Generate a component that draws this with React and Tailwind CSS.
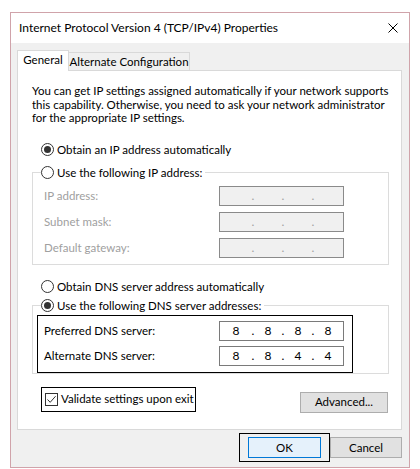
import React from "react";

const font = { fontFamily: 'Lato, "Noto Sans", sans-serif' };

function Radio({ checked, label }) {
	return (
		<div className="flex h-[16px] items-center">
			<span className="flex h-[13px] w-[13px] items-center justify-center rounded-full border border-[#333333] bg-white">
				{checked && <span className="h-[7px] w-[7px] rounded-full bg-[#333333]" />}
			</span>
			<span className="ml-[3px] whitespace-nowrap text-black">{label}</span>
		</div>
	);
}

function IpField({ parts, disabled }) {
	const segs = parts || ["", "", "", ""];
	return (
		<div
			className={
				"flex h-[20px] w-[125px] items-center border pl-[2px] text-[12px] " +
				(disabled ? "border-[#8a8a8a] bg-[#f0f0f0] text-[#a0a0a0]" : "border-[#7a7a7a] bg-white text-black")
			}
		>
			<span className="w-[28px] text-center">{segs[0]}</span>
			<span className="w-[6px] text-center">.</span>
			<span className="w-[24px] text-center">{segs[1]}</span>
			<span className="w-[6px] text-center">.</span>
			<span className="w-[24px] text-center">{segs[2]}</span>
			<span className="w-[6px] text-center">.</span>
			<span className="w-[24px] text-center">{segs[3]}</span>
		</div>
	);
}

function FieldRow({ label, parts, disabled }) {
	return (
		<div className="flex h-[20px] items-center">
			<span className={"w-[175px] " + (disabled ? "text-[#a0a0a0]" : "text-black")}>{label}</span>
			<IpField parts={parts} disabled={disabled} />
		</div>
	);
}

function Button({ children, primary }) {
	return (
		<div
			className={
				"flex h-[21px] items-center justify-center border text-black " +
				(primary ? "w-[73px] border-[#0078d7] bg-[#e5f1fb]" : "w-[72px] border-[#adadad] bg-[#e1e1e1]")
			}
		>
			{children}
		</div>
	);
}

export default function App() {
	return (
		<div className="h-[469px] w-[420px] bg-white pl-[10px] pt-[12px] text-[11.5px] leading-[16px]" style={font}>
			<div className="flex h-[456px] w-[400px] flex-col border border-[#d0a3aa]">
				{/* title bar */}
				<div className="flex h-[30px] items-center justify-between bg-white pl-[8px] pr-[11px] text-[12px]">
					<span className="text-black">Internet Protocol Version 4 (TCP/IPv4) Properties</span>
					<svg width="10" height="10" viewBox="0 0 10 10">
						<path d="M0.5 0.5L9.5 9.5M9.5 0.5L0.5 9.5" stroke="#000" strokeWidth="1" />
					</svg>
				</div>

				<div className="flex flex-1 flex-col bg-[#f0f0f0] pl-[6px] pr-[7px] pt-[7px]">
					{/* tabs */}
					<div className="flex items-end">
						<div className="relative z-10 -mb-px flex h-[21px] w-[52px] items-center justify-center border border-b-0 border-[#d9d9d9] bg-white pb-[2px]">
							General
						</div>
						<div className="flex h-[18px] w-[121px] items-center justify-center whitespace-nowrap border border-b-0 border-l-0 border-[#d9d9d9] bg-[#f0f0f0]">
							Alternate Configuration
						</div>
					</div>

					{/* panel */}
					<div className="flex h-[360px] flex-col border border-[#d9d9d9] bg-white pl-[14px] pr-[12px] pt-[13px]">
						<p className="whitespace-nowrap leading-[13.5px] text-black">
							You can get IP settings assigned automatically if your network supports
							<br />
							this capability. Otherwise, you need to ask your network administrator
							<br />
							for the appropriate IP settings.
						</p>

						<div className="ml-[9px] mt-[17px]">
							<Radio checked label="Obtain an IP address automatically" />
						</div>

						<fieldset className="mt-[7px] border border-[#dcdcdc] pb-[6px] pl-[4px] pt-[5px]">
							<legend className="ml-[4px] pr-[3px]">
								<Radio label="Use the following IP address:" />
							</legend>
							<div className="flex flex-col gap-[6px] pl-[7px]">
								<FieldRow label="IP address:" disabled />
								<FieldRow label="Subnet mask:" disabled />
								<FieldRow label="Default gateway:" disabled />
							</div>
						</fieldset>

						<div className="ml-[9px] mt-[14px]">
							<Radio label="Obtain DNS server address automatically" />
						</div>

						<fieldset className="mt-[3px] border border-[#dcdcdc] pl-[4px] pt-[1px]">
							<legend className="ml-[4px] pr-[3px]">
								<Radio checked label="Use the following DNS server addresses:" />
							</legend>
							<div className="flex w-[316px] flex-col gap-[5px] border border-black pb-[6px] pl-[6px] pt-[5px]">
								<FieldRow label="Preferred DNS server:" parts={["8", "8", "8", "8"]} />
								<FieldRow label="Alternate DNS server:" parts={["8", "8", "4", "4"]} />
							</div>
						</fieldset>

						<div className="ml-[9px] mr-[1px] mt-[13px] flex items-start justify-between">
							<div className="flex h-[25px] w-[155px] items-center border border-black pl-[3px]">
								<span className="flex h-[13px] w-[13px] items-center justify-center border border-[#333333] bg-white">
									<svg width="11" height="11" viewBox="0 0 11 11">
										<path d="M1.5 5.5L4.2 8.3L9.6 2.2" fill="none" stroke="#333" strokeWidth="1" />
									</svg>
								</span>
								<span className="ml-[3px] whitespace-nowrap">Validate settings upon exit</span>
							</div>
							<div className="mt-[5px] flex h-[21px] w-[88px] items-center justify-center border border-[#adadad] bg-[#e1e1e1]">
								Advanced...
							</div>
						</div>
					</div>

					{/* dialog buttons */}
					<div className="mt-[3px] flex items-center justify-end">
						<div className="border border-black px-[8px] py-[3px]">
							<Button primary>OK</Button>
						</div>
						<Button>Cancel</Button>
					</div>
				</div>
			</div>
		</div>
	);
}
